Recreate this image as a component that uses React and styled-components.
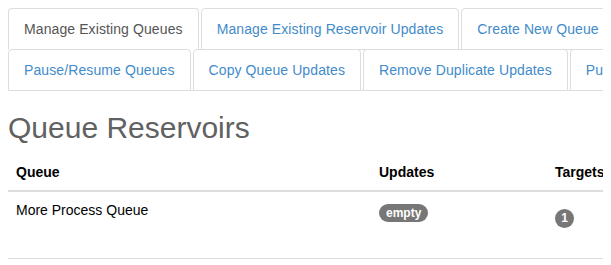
import React from "react";
import styled, { createGlobalStyle } from "styled-components";

const Global = createGlobalStyle`
  html, body { overflow: hidden; }
  body {
    margin: 8px;
    font-family: "Liberation Sans", Arial, sans-serif;
    font-size: 14px;
    line-height: 20px;
    color: #333;
    background: #fff;
  }
`;

const Page = styled.div`
  width: 760px;
`;

const Tabs = styled.ul`
  list-style: none;
  margin: 0;
  padding: 0;
  display: flex;
  flex-wrap: wrap;
  border-bottom: 1px solid #ddd;
`;

const Tab = styled.li`
  margin: 0 2px -1px 0;
  a {
    display: block;
    padding: 10px 15px;
    border: 1px solid #ddd;
    border-bottom-color: ${(p) => (p.$active ? "transparent" : "#ddd")};
    border-radius: 4px 4px 0 0;
    background: #fff;
    color: ${(p) => (p.$active ? "#555" : "#428bca")};
    letter-spacing: 0.1px;
    text-decoration: none;
    white-space: nowrap;
    cursor: ${(p) => (p.$active ? "default" : "pointer")};
  }
`;

const Title = styled.h2`
  margin: 20px 0 10px;
  font-size: 30px;
  font-weight: 500;
  line-height: 1.1;
  color: #616161;
`;

const Table = styled.table`
  width: 100%;
  border-collapse: collapse;
  border-spacing: 0;
`;

const Th = styled.th`
  text-align: left;
  padding: 8px;
  border-bottom: 2px solid #ddd;
  color: #000;
  width: ${(p) => p.$w || "auto"};
`;

const Td = styled.td`
  padding: 8px;
  vertical-align: top;
  border-bottom: 1px solid #ddd;
  color: #000;
`;

const Cell = styled.div`
  height: 50px;
  padding-top: ${(p) => p.$offset || 0}px;
  box-sizing: border-box;
`;

const Badge = styled.span`
  display: inline-block;
  min-width: 10px;
  padding: 3px 7px;
  font-size: 12px;
  font-weight: bold;
  line-height: 1;
  color: #fff;
  text-align: center;
  white-space: nowrap;
  vertical-align: middle;
  background: #777;
  border-radius: 10px;
`;

const Circle = styled(Badge)`
  min-width: 0;
  width: 19px;
  height: 19px;
  padding: 0;
  line-height: 19px;
`;

const tabs = [
  "Manage Existing Queues",
  "Manage Existing Reservoir Updates",
  "Create New Queue",
  "Pause/Resume Queues",
  "Copy Queue Updates",
  "Remove Duplicate Updates",
  "Purge Queue Updates",
];

export default function App() {
  return (
    <Page>
      <Global />
      <Tabs>
        {tabs.map((t, i) => (
          <Tab key={t} $active={i === 0}>
            <a>{t}</a>
          </Tab>
        ))}
      </Tabs>
      <Title>Queue Reservoirs</Title>
      <Table>
        <thead>
          <tr>
            <Th $w="347px">Queue</Th>
            <Th $w="160px">Updates</Th>
            <Th>Targets</Th>
          </tr>
        </thead>
        <tbody>
          <tr>
            <Td><Cell>More Process Queue</Cell></Td>
            <Td><Cell $offset={2}><Badge>empty</Badge></Cell></Td>
            <Td><Cell $offset={7}><Circle>1</Circle></Cell></Td>
          </tr>
        </tbody>
      </Table>
    </Page>
  );
}
